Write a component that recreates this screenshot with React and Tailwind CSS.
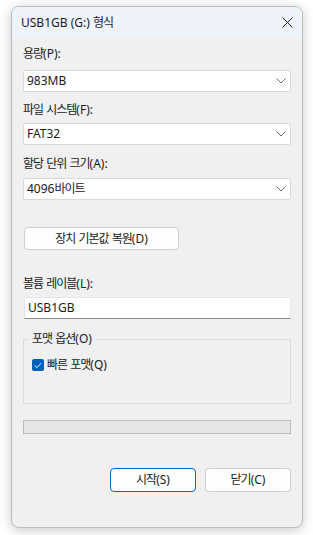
import React from "react";

function T({ children }) {
  const parts = String(children).split(/([\uAC00-\uD7A3]+)/);
  return (
    <>
      {parts.map((p, i) =>
        /[\uAC00-\uD7A3]/.test(p) ? (
          <span key={i} className="tracking-[-1px]">{p}</span>
        ) : (
          <React.Fragment key={i}>{p}</React.Fragment>
        )
      )}
    </>
  );
}

function Chevron() {
  return (
    <svg width="10" height="6" viewBox="0 0 10 6" className="shrink-0">
      <polyline points="0.5,0.5 5,5 9.5,0.5" fill="none" stroke="#6a6a6a" strokeWidth="1" />
    </svg>
  );
}

function Select({ value }) {
  return (
    <div className="h-[22px] w-full bg-white border border-[#d9d9d9] rounded-[2px] flex items-center justify-between pl-[3px] pr-[4px]">
      <span className="leading-[16px]"><T>{value}</T></span>
      <Chevron />
    </div>
  );
}

function Label({ children, className = "" }) {
  return <div className={"h-[16px] leading-[16px] " + className}><T>{children}</T></div>;
}

export default function App() {
  return (
    <div className="w-[313px] h-[535px] bg-white pt-[6px] pl-[11px] text-[12px] text-[#1b1b1b] font-['Noto_Sans','Noto_Sans_CJK_KR',sans-serif]">
      <div className="w-[292px] h-[522px] rounded-[8px] border border-[#bcbcbc] bg-[#f0f0f0] shadow-[0_2px_12px_rgba(0,0,0,0.22)] overflow-hidden flex flex-col">
        <div className="h-[30px] bg-[#eef2f9] flex items-center justify-between pl-[9px] pr-[9px]">
          <span className="leading-[16px] pt-[1px]"><T>USB1GB (G:) 형식</T></span>
          <svg width="11" height="11" viewBox="0 0 11 11">
            <line x1="0.5" y1="0.5" x2="10.5" y2="10.5" stroke="#1b1b1b" strokeWidth="1" />
            <line x1="10.5" y1="0.5" x2="0.5" y2="10.5" stroke="#1b1b1b" strokeWidth="1" />
          </svg>
        </div>
        <div className="flex flex-col px-[11px]">
          <Label className="mt-[9px]">용량(P):</Label>
          <div className="mt-[8px]"><Select value="983MB" /></div>
          <Label className="mt-[10px]">파일 시스템(F):</Label>
          <div className="mt-[5px]"><Select value="FAT32" /></div>
          <Label className="mt-[11px]">할당 단위 크기(A):</Label>
          <div className="mt-[6px]"><Select value="4096바이트" /></div>
          <button className="mt-[27px] ml-[1px] w-[155px] h-[23px] rounded-[4px] bg-[#fdfdfd] border border-[#d0d0d0] leading-[16px] flex items-center justify-center">
            <span><T>장치 기본값 복원(D)</T></span>
          </button>
          <Label className="mt-[26px]">볼륨 레이블(L):</Label>
          <div className="mt-[5px] ml-[1px] h-[22px] bg-white border border-[#e6e6e6] border-b-[#8a8a8a] flex items-center pl-[3px]">
            <span className="leading-[16px]">USB1GB</span>
          </div>
          <fieldset className="mt-[12px] border border-[#dcdcdc] pl-[4px] pr-[8px] pb-[30px]">
            <legend className="px-[4px] leading-[16px]"><T>포맷 옵션(O)</T></legend>
            <div className="mt-[10px] flex items-center h-[16px]">
              <div className="w-[12px] h-[12px] rounded-[2px] bg-[#005fb8] flex items-center justify-center ml-[4px]">
                <svg width="8" height="7" viewBox="0 0 8 7">
                  <polyline points="0.8,3.6 2.9,5.6 7.2,1.2" fill="none" stroke="white" strokeWidth="1" />
                </svg>
              </div>
              <span className="ml-[3px] leading-[16px]"><T>빠른 포맷(Q)</T></span>
            </div>
          </fieldset>
          <div className="mt-[16px] h-[14px] bg-[#e6e6e6] border border-[#bcbcbc]"></div>
          <div className="mt-[34px] flex justify-end gap-[9px]">
            <button className="w-[86px] h-[24px] rounded-[4px] bg-[#fdfdfd] border border-[#0067c0] leading-[16px] flex items-center justify-center">
              <span><T>시작(S)</T></span>
            </button>
            <button className="w-[86px] h-[24px] rounded-[4px] bg-[#fdfdfd] border border-[#d0d0d0] leading-[16px] flex items-center justify-center">
              <span><T>닫기(C)</T></span>
            </button>
          </div>
        </div>
      </div>
    </div>
  );
}
